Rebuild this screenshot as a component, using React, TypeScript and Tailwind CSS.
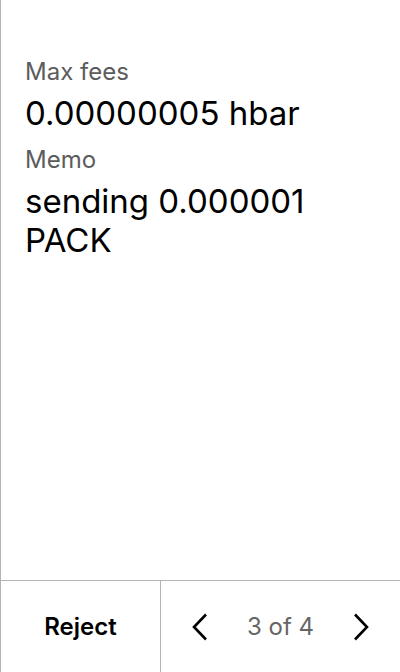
function Chevron({ dir }: { dir: "left" | "right" }) {
  return (
    <svg width="16" height="28" viewBox="0 0 16 28" fill="none" stroke="black" strokeWidth="2.6" strokeLinecap="butt" strokeLinejoin="miter">
      {dir === "left" ? <polyline points="14,1.5 2,14 14,26.5" /> : <polyline points="2,1.5 14,14 2,26.5" />}
    </svg>
  );
}

export default function App() {
  const fields = [
    { label: "Max fees", value: "0.00000005 hbar" },
    { label: "Memo", value: "sending 0.000001 PACK" },
  ];

  return (
    <div
      className="w-[400px] h-[672px] flex flex-col bg-white border-l border-[#b3b3b3] text-black"
      style={{ fontFamily: "Inter, 'Noto Sans', sans-serif" }}
    >
      <div className="flex-1 px-6 pt-[56px]">
        {fields.map((f, i) => (
          <div key={i} className="mb-[11px]">
            <p className="text-[24px] leading-[32px] text-[#5c5c5c]">{f.label}</p>
            <p className="mt-[6px] text-[33px] leading-[39px]">{f.value}</p>
          </div>
        ))}
      </div>

      {/* Footer */}
      <div className="h-[92px] flex border-t border-[#b3b3b3]">
        <button className="w-[160px] flex items-center justify-center border-r border-[#b3b3b3] text-[24px] font-semibold">
          Reject
        </button>
        <div className="flex-1 flex items-center justify-between pl-[31px] pr-[31px]">
          <Chevron dir="left" />
          <span className="text-[24px] text-[#666666]">3 of 4</span>
          <Chevron dir="right" />
        </div>
      </div>
    </div>
  );
}
